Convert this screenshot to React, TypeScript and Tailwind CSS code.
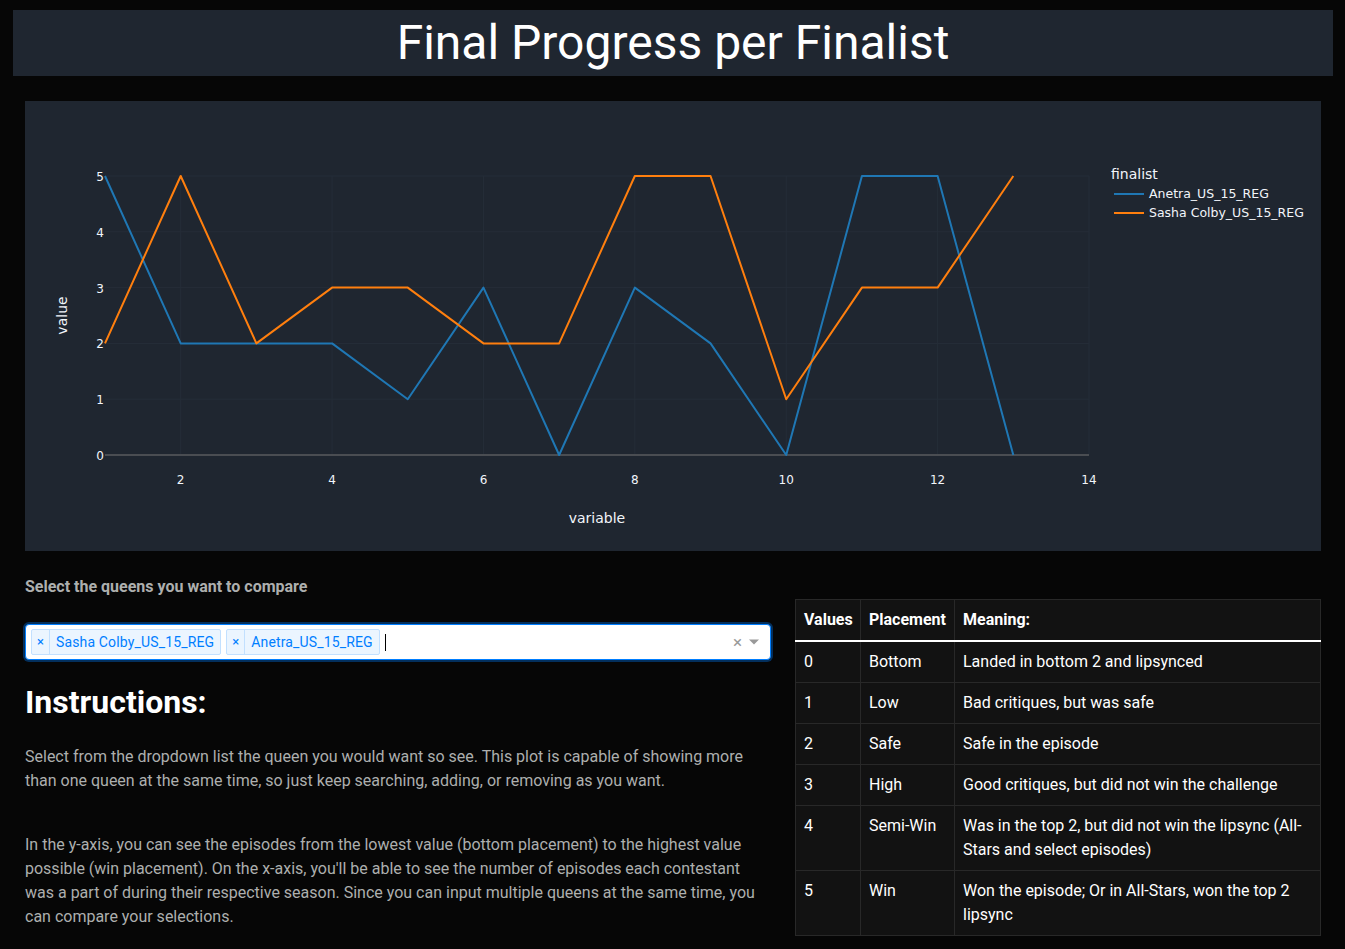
const anetra = [5, 2, 2, 2, 1, 3, 0, 3, 2, 0, 5, 5, 0];
const sasha = [2, 5, 2, 3, 3, 2, 2, 5, 5, 1, 3, 3, 5];

const X0 = 80;
const X1 = 1064;
const Y0 = 75;
const Y1 = 354;
const sx = (v: number) => X0 + ((v - 1) * (X1 - X0)) / 13;
const sy = (v: number) => Y1 - (v * (Y1 - Y0)) / 5;

const toPoints = (values: number[]) => values.map((v, i) => `${sx(i + 1)},${sy(v)}`).join(" ");

const rows = [
  ["0", "Bottom", "Landed in bottom 2 and lipsynced"],
  ["1", "Low", "Bad critiques, but was safe"],
  ["2", "Safe", "Safe in the episode"],
  ["3", "High", "Good critiques, but did not win the challenge"],
  ["4", "Semi-Win", "Was in the top 2, but did not win the lipsync (All-Stars and select episodes)"],
  ["5", "Win", "Won the episode; Or in All-Stars, won the top 2 lipsync"]
];

function Chart() {
  const font = "'DejaVu Sans', Verdana, sans-serif";
  return (
    <div className="h-[450px] bg-[#1f2630]">
      <svg width="1296" height="450" viewBox="0 0 1296 450" className="block">
        {[2, 4, 6, 8, 10, 12, 14].map((t) => (
          <line key={t} x1={sx(t)} x2={sx(t)} y1={Y0} y2={Y1} stroke="#252d38" strokeWidth="1" />
        ))}
        {[1, 2, 3, 4, 5].map((t) => (
          <line key={t} x1={X0} x2={X1} y1={sy(t)} y2={sy(t)} stroke="#252d38" strokeWidth="1" />
        ))}
        <line x1={X0} x2={X1} y1={Y1} y2={Y1} stroke="#4a4d52" strokeWidth="2" />
        <polyline points={toPoints(anetra)} fill="none" stroke="#1f77b4" strokeWidth="2" strokeLinejoin="round" />
        <polyline points={toPoints(sasha)} fill="none" stroke="#ff7f0e" strokeWidth="2" strokeLinejoin="round" />
        <g fill="#f2f5fa" fontFamily={font} fontSize="12">
          {[2, 4, 6, 8, 10, 12, 14].map((t) => (
            <text key={t} x={sx(t)} y={383} textAnchor="middle">
              {t}
            </text>
          ))}
          {[0, 1, 2, 3, 4, 5].map((t) => (
            <text key={t} x={79} y={sy(t) + 5} textAnchor="end">
              {t}
            </text>
          ))}
        </g>
        <g fill="#f2f5fa" fontFamily={font} fontSize="14">
          <text x={(X0 + X1) / 2} y={422} textAnchor="middle">
            variable
          </text>
          <text x={0} y={0} textAnchor="middle" transform={`translate(42 ${(Y0 + Y1) / 2}) rotate(-90)`}>
            value
          </text>
          <text x={1086} y={78}>finalist</text>
        </g>
        <line x1={1089} x2={1119} y1={93} y2={93} stroke="#1f77b4" strokeWidth="2" />
        <line x1={1089} x2={1119} y1={112} y2={112} stroke="#ff7f0e" strokeWidth="2" />
        <g fill="#f2f5fa" fontFamily={font} fontSize="12.5">
          <text x={1124} y={97}>Anetra_US_15_REG</text>
          <text x={1124} y={116}>Sasha Colby_US_15_REG</text>
        </g>
      </svg>
    </div>
  );
}

function Tag({ label }: { label: string }) {
  return (
    <span className="flex h-[26px] items-stretch rounded-[2px] border border-[#c2e0ff] bg-[#ebf5ff] text-sm text-[#007eff]">
      <span className="flex w-[18px] items-center justify-center border-r border-[#c2e0ff] text-[13px]">×</span>
      <span className="flex items-center pl-[6px] pr-[6px] tracking-[0.15px]">{label}</span>
    </span>
  );
}

function Dropdown() {
  return (
    <div className="flex h-[36px] items-center rounded-[4px] border border-[#007eff] bg-white pl-[5px] pr-[10px] shadow-[0_0_0_2px_rgba(0,126,255,0.35)]">
      <div className="flex flex-1 items-center gap-[5px]">
        <Tag label="Sasha Colby_US_15_REG" />
        <Tag label="Anetra_US_15_REG" />
        <span className="h-[17px] w-px bg-black" />
      </div>
      <span className="mr-[6px] text-[17px] leading-none text-[#999]">×</span>
      <svg width="12" height="8" viewBox="0 0 12 8">
        <path d="M1 1.5h10L6 6.5z" fill="#999" />
      </svg>
    </div>
  );
}

export default function App() {
  return (
    <div className="min-h-screen bg-[#060606] pb-[14px] pl-[13px] pr-[12px] pt-[10px] font-['Roboto',sans-serif] text-[#adafae]">
      <div className="flex h-[66px] items-center justify-center bg-[#1f2630]">
        <h1 className="text-[48px] leading-none text-white">Final Progress per Finalist</h1>
      </div>
      <div className="px-3 pt-[25px]">
        <Chart />
        <div className="grid grid-cols-[746px_526px] gap-x-[24px]">
          <div>
            <div className="mt-[24px] text-base font-bold leading-6">Select the queens you want to compare</div>
            <div className="mt-[25px]">
              <Dropdown />
            </div>
            <h2 className="mt-[23px] text-[32px] font-bold leading-[38px] text-white">Instructions:</h2>
            <p className="mt-[24px] text-base leading-6">
              Select from the dropdown list the queen you would want so see. This plot is capable of showing more than one
              queen at the same time, so just keep searching, adding, or removing as you want.
            </p>
            <p className="mt-[40px] text-base leading-6">
              In the y-axis, you can see the episodes from the lowest value (bottom placement) to the highest value possible
              (win placement). On the x-axis, you'll be able to see the number of episodes each contestant was a part of
              during their respective season. Since you can input multiple queens at the same time, you can compare your
              selections.
            </p>
          </div>
          <div className="mt-[48px]">
            <table className="w-full table-fixed border-collapse bg-[#121212] text-base leading-6 text-white">
              <colgroup>
                <col className="w-[65px]" />
                <col className="w-[94px]" />
                <col />
              </colgroup>
              <thead>
                <tr className="border-b-2 border-b-white">
                  {["Values", "Placement", "Meaning:"].map((h) => (
                    <th key={h} className="border border-[#282828] border-b-white px-2 py-2 text-left font-bold">
                      {h}
                    </th>
                  ))}
                </tr>
              </thead>
              <tbody>
                {rows.map((r) => (
                  <tr key={r[0]}>
                    {r.map((c, i) => (
                      <td key={i} className="border border-[#282828] px-2 py-2 align-top">
                        {c}
                      </td>
                    ))}
                  </tr>
                ))}
              </tbody>
            </table>
          </div>
        </div>
      </div>
    </div>
  );
}
